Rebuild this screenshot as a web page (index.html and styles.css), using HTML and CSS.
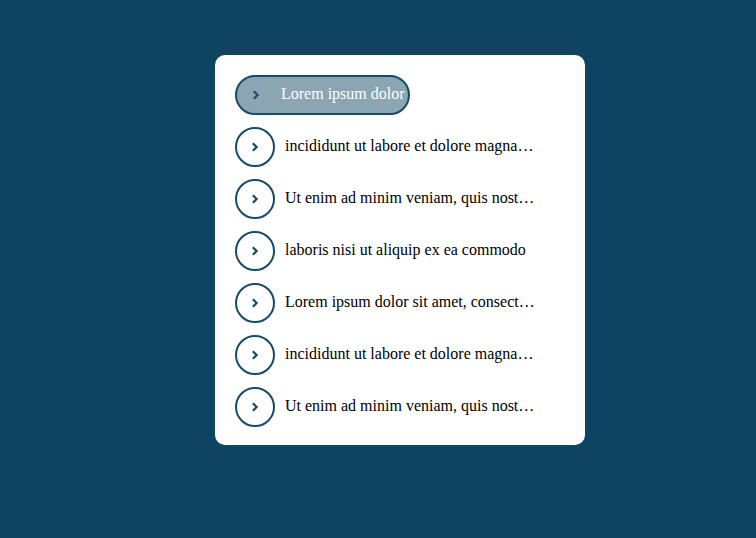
FILE: index.html
```html
<!DOCTYPE html>
<html>
<head>
<meta charset="utf-8">
<link rel="stylesheet" href="styles.css">
</head>
<body>
<div class="card">
  <ul class="list">
    <li class="item active">
      <span class="pill">
        <svg class="chev" width="10" height="10" viewBox="0 0 10 10"><path d="M2.8 1.2 L6.6 5 L2.8 8.8"/></svg>
        <span class="pill-text">Lorem ipsum dolor sit amet, consectetur</span>
      </span>
    </li>
    <li class="item">
      <span class="circle"><svg class="chev" width="10" height="10" viewBox="0 0 10 10"><path d="M2.8 1.2 L6.6 5 L2.8 8.8"/></svg></span>
      <span class="text">incididunt ut labore et dolore magna aliqua</span>
    </li>
    <li class="item">
      <span class="circle"><svg class="chev" width="10" height="10" viewBox="0 0 10 10"><path d="M2.8 1.2 L6.6 5 L2.8 8.8"/></svg></span>
      <span class="text">Ut enim ad minim veniam, quis nostrud exercitation</span>
    </li>
    <li class="item">
      <span class="circle"><svg class="chev" width="10" height="10" viewBox="0 0 10 10"><path d="M2.8 1.2 L6.6 5 L2.8 8.8"/></svg></span>
      <span class="text">laboris nisi ut aliquip ex ea commodo</span>
    </li>
    <li class="item">
      <span class="circle"><svg class="chev" width="10" height="10" viewBox="0 0 10 10"><path d="M2.8 1.2 L6.6 5 L2.8 8.8"/></svg></span>
      <span class="text">Lorem ipsum dolor sit amet, consectetur adipiscing</span>
    </li>
    <li class="item">
      <span class="circle"><svg class="chev" width="10" height="10" viewBox="0 0 10 10"><path d="M2.8 1.2 L6.6 5 L2.8 8.8"/></svg></span>
      <span class="text">incididunt ut labore et dolore magna aliqua</span>
    </li>
    <li class="item">
      <span class="circle"><svg class="chev" width="10" height="10" viewBox="0 0 10 10"><path d="M2.8 1.2 L6.6 5 L2.8 8.8"/></svg></span>
      <span class="text">Ut enim ad minim veniam, quis nostrud exercitation</span>
    </li>
  </ul>
</div>
</body>
</html>
```
FILE: styles.css
```css
html, body {
  margin: 0;
  padding: 0;
}
body {
  background: #0e4461;
  width: 756px;
  height: 538px;
  overflow: hidden;
  font-family: "Liberation Serif", "Times New Roman", serif;
  font-size: 16px;
  color: #000;
}
.card {
  margin: 55px 0 0 215px;
  width: 370px;
  height: 390px;
  box-sizing: border-box;
  background: #fff;
  border-radius: 10px;
  padding: 20px 20px 0 20px;
}
.list {
  list-style: none;
  margin: 0;
  padding: 0;
  display: flex;
  flex-direction: column;
  gap: 12px;
}
.item {
  display: flex;
  align-items: center;
  height: 40px;
}
.circle {
  width: 40px;
  height: 40px;
  box-sizing: border-box;
  border: 2px solid #164b6a;
  border-radius: 50%;
  display: flex;
  align-items: center;
  justify-content: center;
  flex: none;
}
.chev {
  display: block;
  flex: none;
}
.chev path {
  fill: none;
  stroke: #164b6a;
  stroke-width: 2.2;
}
.text {
  margin-left: 10px;
  margin-bottom: 2px;
  width: 250px;
  white-space: nowrap;
  overflow: hidden;
  text-overflow: ellipsis;
  line-height: 20px;
}
.pill {
  width: 175px;
  height: 40px;
  box-sizing: border-box;
  border: 2px solid #164b6a;
  border-radius: 20px;
  background: #8ca5b2;
  display: flex;
  align-items: center;
  overflow: hidden;
  padding-left: 14px;
}
.pill-text {
  color: #fff;
  white-space: nowrap;
  margin-left: 20px;
  margin-bottom: 2px;
  line-height: 20px;
}
```
